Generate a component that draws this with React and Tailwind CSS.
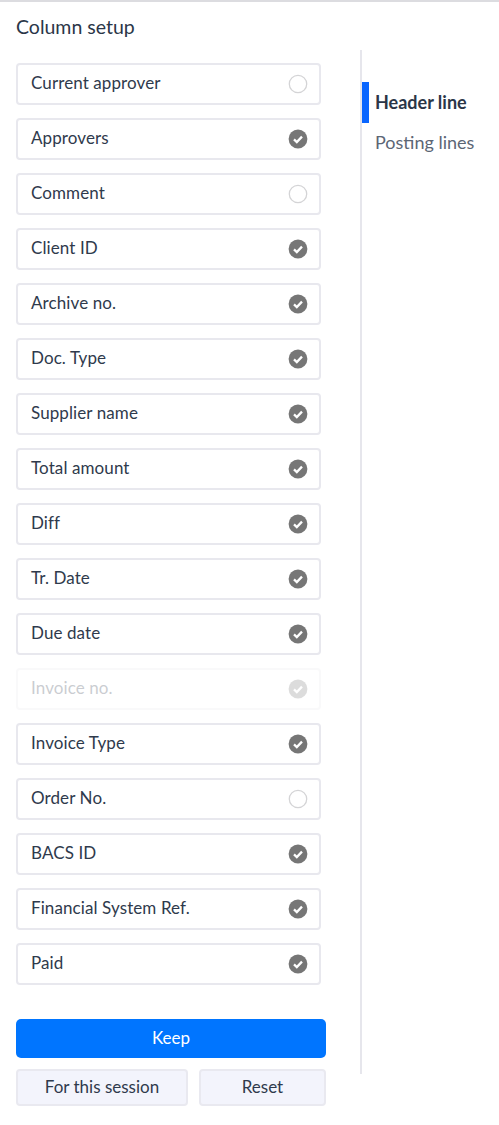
import React from "react";

const columns = [
  { label: "Current approver", checked: false },
  { label: "Approvers", checked: true },
  { label: "Comment", checked: false },
  { label: "Client ID", checked: true },
  { label: "Archive no.", checked: true },
  { label: "Doc. Type", checked: true },
  { label: "Supplier name", checked: true },
  { label: "Total amount", checked: true },
  { label: "Diff", checked: true },
  { label: "Tr. Date", checked: true },
  { label: "Due date", checked: true },
  { label: "Invoice no.", checked: true, disabled: true },
  { label: "Invoice Type", checked: true },
  { label: "Order No.", checked: false },
  { label: "BACS ID", checked: true },
  { label: "Financial System Ref.", checked: true },
  { label: "Paid", checked: true },
];

const CheckIcon = ({ checked }) => {
  if (!checked) {
    return (
      <svg width="20" height="20" viewBox="0 0 20 20">
        <circle cx="10" cy="10" r="8.7" fill="white" stroke="#d4d4d6" strokeWidth="1.3" />
      </svg>
    );
  }
  return (
    <svg width="20" height="20" viewBox="0 0 20 20">
      <circle cx="10" cy="10" r="9.4" fill="#767676" />
      <path d="M6 10.3l2.8 2.7L14 7.6" fill="none" stroke="white" strokeWidth="2.3" />
    </svg>
  );
};

const ColumnRow = ({ label, checked, disabled }) => (
  <div
    className={`flex h-[42px] w-[305px] items-center justify-between rounded-[4px] border-2 pl-[13px] pr-[11px] ${
      disabled ? "border-[#f9f9fa]" : "border-[#e8e8ee]"
    }`}
  >
    <span className={`mt-[-3px] text-[17px] leading-none tracking-[0.1px] text-[#2f3a4c] ${disabled ? "opacity-25" : ""}`}>
      {label}
    </span>
    <span className={`flex ${disabled ? "opacity-25" : ""}`}>
      <CheckIcon checked={checked} />
    </span>
  </div>
);

export default function App() {
  return (
    <div className="h-[1125px] w-[499px] overflow-hidden border-t-2 border-[#dcdce0] bg-white font-['Lato','Open_Sans',sans-serif]">
      <div className="flex">
        <div className="w-[360px] pl-4">
          <h2 className="mt-[13px] text-[19.5px] leading-6 font-normal text-[#2b3648]">Column setup</h2>
          <div className="mt-[24px] flex flex-col gap-[13px]">
            {columns.map((c) => (
              <ColumnRow key={c.label} {...c} />
            ))}
          </div>
          <div className="mt-[34px] w-[310px]">
            <button className="h-[39px] w-full rounded-[5px] bg-[#0075ff] pb-[2px] text-[17px] text-white">Keep</button>
            <div className="mt-[11px] flex justify-between">
              <button className="h-[37px] w-[172px] rounded-[4px] border-2 border-[#e9e9f0] bg-[#f3f4fc] pb-[2px] text-[17px] text-[#2f3a4c]">
                For this session
              </button>
              <button className="h-[37px] w-[127px] rounded-[4px] border-2 border-[#e9e9f0] bg-[#f3f4fc] pb-[2px] text-[17px] text-[#2f3a4c]">
                Reset
              </button>
            </div>
          </div>
        </div>
        <div className="mt-[48px] h-[1024px] flex-1 border-l-2 border-[#e6e6ec] pt-[32px]">
          <div className="flex h-[41px] items-center border-l-[7px] border-[#0a66ff] pb-[1px] pl-[6px] text-[18px] font-bold text-[#2b3648]">
            Header line
          </div>
          <div className="mt-[2px] flex h-[37px] items-center pb-[3px] pl-[13px] text-[18px] text-[#5c6675]">Posting lines</div>
        </div>
      </div>
    </div>
  );
}
